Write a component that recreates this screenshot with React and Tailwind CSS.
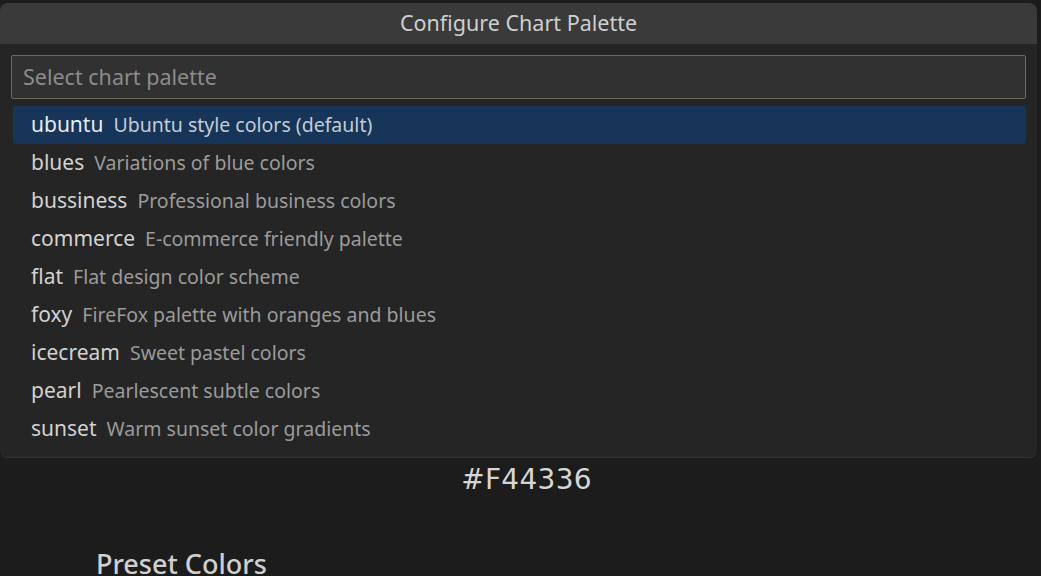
import React from 'react'

const palettes = [
    { name: 'ubuntu', desc: 'Ubuntu style colors (default)' },
    { name: 'blues', desc: 'Variations of blue colors' },
    { name: 'bussiness', desc: 'Professional business colors' },
    { name: 'commerce', desc: 'E-commerce friendly palette' },
    { name: 'flat', desc: 'Flat design color scheme' },
    { name: 'foxy', desc: 'FireFox palette with oranges and blues' },
    { name: 'icecream', desc: 'Sweet pastel colors' },
    { name: 'pearl', desc: 'Pearlescent subtle colors' },
    { name: 'sunset', desc: 'Warm sunset color gradients' },
]

const PaletteRow = ({ name, desc, selected }) => {
    return (
        <div
            className={
                selected
                    ? 'flex h-[38px] items-center rounded-[3px] bg-[#163558] pl-[18px]'
                    : 'flex h-[38px] items-center pl-[18px]'
            }
        >
            <span className={selected ? 'text-[21px] text-[#e6ecf2]' : 'text-[21px] text-[#d2d2d2]'}>{name}</span>
            <span className={selected ? 'ml-[10px] text-[19.5px] text-[#c3ccd6]' : 'ml-[10px] text-[19.5px] text-[#9b9b9b]'}>
                {desc}
            </span>
        </div>
    )
}

const App = () => {
    return (
        <div className="h-[576px] w-[1041px] overflow-hidden bg-[#1c1c1c] pt-[3px] font-['Noto_Sans',sans-serif]">
            <div className="mr-[4px] overflow-hidden rounded-lg border-b border-[#333333] bg-[#252525]">
                <div className="flex h-[41px] items-center justify-center bg-[#3a3a3a] text-[21.5px] text-[#cfcfcf]">
                    Configure Chart Palette
                </div>
                <div className="px-[11px] pt-[11px] pb-[9px]">
                    <div className="flex h-[44px] items-center rounded-[2px] border border-[#6e6a5e] bg-[#313131] px-[11px] text-[21.5px] text-[#8c8c8c]">
                        Select chart palette
                    </div>
                    <div className="mt-[7px] ml-[2px]">
                        {palettes.map((p, i) => (
                            <PaletteRow key={p.name} name={p.name} desc={p.desc} selected={i === 0} />
                        ))}
                    </div>
                </div>
            </div>
            <div className="mt-[1px] pl-[12px] text-center font-['DejaVu_Sans',sans-serif] text-[28px] tracking-[0.3px] text-[#d6d6d6]">
                #F44336
            </div>
            <div className="mt-[43px] pl-[96px] text-[27px] font-medium text-[#d0d0d0]">Preset Colors</div>
        </div>
    )
}

export default App
